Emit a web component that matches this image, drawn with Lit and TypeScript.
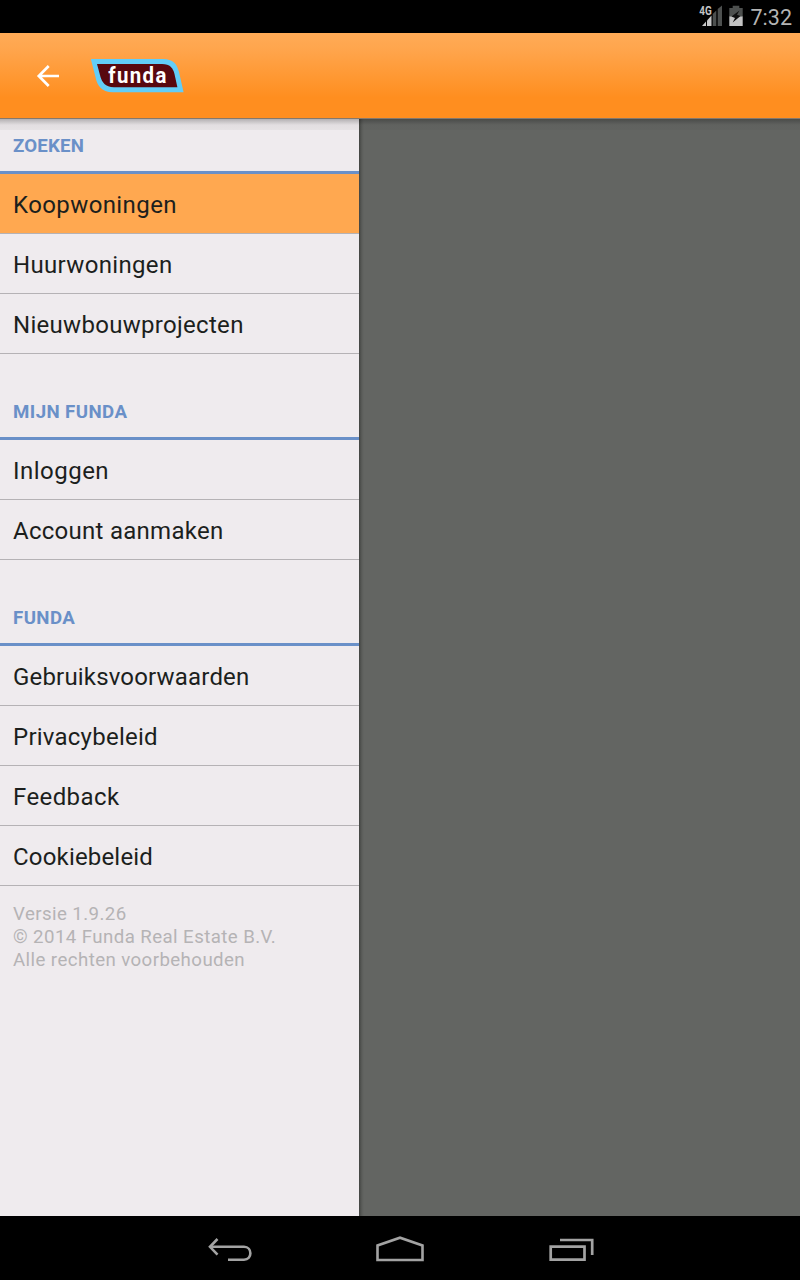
import { LitElement, html, css } from "lit";
import { customElement, property } from "lit/decorators.js";
import { styleMap } from "lit/directives/style-map.js";

interface Label {
  text: string;
  tracking: number;
}

interface Section {
  title: Label;
  items: Label[];
}

const label = (text: string, tracking: number): Label => ({ text, tracking });

const SECTIONS: Section[] = [
  {
    title: label("ZOEKEN", 0.2),
    items: [label("Koopwoningen", 0.4), label("Huurwoningen", 0.34), label("Nieuwbouwprojecten", 0.3)],
  },
  {
    title: label("MIJN FUNDA", 0.42),
    items: [label("Inloggen", 0.48), label("Account aanmaken", 0.27)],
  },
  {
    title: label("FUNDA", 0.4),
    items: [
      label("Gebruiksvoorwaarden", 0.18),
      label("Privacybeleid", 0.24),
      label("Feedback", 0.4),
      label("Cookiebeleid", 0.18),
    ],
  },
];

@customElement("status-bar")
export class StatusBar extends LitElement {
  static styles = css`
    :host {
      display: flex;
      align-items: center;
      justify-content: flex-end;
      height: 33px;
      padding-right: 8px;
      background: #000;
      color: #b4b4b4;
      box-sizing: border-box;
    }
    .icons { display: block; margin-right: 7px; }
    .net { font: 700 12.5px "Roboto", sans-serif; fill: #c4c4c4; }
    .clock { font-size: 21.5px; line-height: 33px; height: 32px; }
  `;
  render() {
    return html`
      <svg class="icons" width="46" height="33" viewBox="698 0 46 33">
        <path d="M702 26 L706 21.500 V26Z" fill="#c8c8c8" />
        <path d="M707 20.500 L711.500 15.500 V26 H707Z" fill="#c8c8c8" />
        <path d="M712.700 14 L716.300 10.500 V26 H712.700Z M717.700 9 L722 5.500 V26 H717.700Z" fill="#4d504f" />
        <text class="net" x="699.300" y="15.200" textLength="12.500" lengthAdjust="spacingAndGlyphs">4G</text>
        <path d="M729.300 8 H732.700 V5.700 H739.300 V8 H742.700 V17 H729.300Z" fill="#4d504f" />
        <path d="M729.300 16.500 H742.700 V26 H729.300Z" fill="#c4c4c4" />
        <path d="M739.500 10.500 L731.500 16.500 L735 18 L732.700 22.500 L740.500 16 L737 14.700Z" fill="#101010" />
      </svg>
      <span class="clock">7:32</span>
    `;
  }
}

@customElement("action-bar")
export class ActionBar extends LitElement {
  static styles = css`
    :host {
      display: flex;
      align-items: center;
      height: 86px;
      padding-left: 36px;
      box-sizing: border-box;
      border-bottom: 1px solid #85786c;
      background: linear-gradient(#ffab57 0, #ffa54c 20%, #ff8e1f 76%, #ff8e1f 100%);
    }
    .back { display: block; margin-right: 31px; }
    .logo { display: block; }
    .brand { font: 700 22.5px "Roboto", sans-serif; fill: #fff; letter-spacing: 1.5px; }
  `;
  render() {
    return html`
      <svg class="back" width="24" height="26" viewBox="36 63 24 26">
        <path d="M59 76 H39 M48.700 66 L38.800 76 L48.700 86" fill="none" stroke="#fff" stroke-width="2.700" />
      </svg>
      <svg class="logo" width="93" height="36" viewBox="91 58 93 36">
        <path d="M90.800 59 H163 C173 59 177 64 179 72 L183.600 92.300 H113 C101 92 97 85 95.500 77Z" fill="#62cdf8" />
        <path d="M97 64 H162 C170 64 173 68 174.500 74 L177.400 87.200 H114 C105 87 102 82 100.500 77Z" fill="#58080f" />
        <text class="brand" x="108.300" y="82.800" textLength="59.500" lengthAdjust="spacingAndGlyphs">funda</text>
      </svg>
    `;
  }
}

@customElement("drawer-section")
export class DrawerSection extends LitElement {
  static styles = css`
    :host { display: block; }
    .title {
      height: 86px;
      padding: 0 13px 14px;
      box-sizing: border-box;
      display: flex;
      align-items: flex-end;
      border-bottom: 3px solid #6a90c8;
      color: #6a90c8;
      font-size: 18.67px;
      font-weight: 700;
      line-height: 22px;
    }
    .title.first { height: 55px; }
    .item {
      height: 60px;
      box-sizing: border-box;
      padding: 2px 13px 0;
      border-bottom: 1px solid #b5b2b5;
      color: #1c1f1d;
      font-size: 24px;
      line-height: 59px;
      white-space: nowrap;
    }
    .item.active { background: #ffa850; }
  `;
  @property({ attribute: false }) section!: Section;
  @property({ type: Boolean }) first = false;

  private tracking(l: Label) {
    return styleMap({ letterSpacing: `${l.tracking}px` });
  }

  render() {
    const { title, items } = this.section;
    return html`
      <div class="title ${this.first ? "first" : ""}" style=${this.tracking(title)}>${title.text}</div>
      ${items.map(
        (l, i) => html`<div class="item ${this.first && i === 0 ? "active" : ""}" style=${this.tracking(l)}>${l.text}</div>`,
      )}
    `;
  }
}

@customElement("nav-bar")
export class NavBar extends LitElement {
  static styles = css`
    :host { display: block; height: 64px; background: #000; }
    svg { display: block; }
  `;
  render() {
    return html`
      <svg width="800" height="64" viewBox="0 1216 800 64" fill="none" stroke="#a3a3a3">
        <path d="M211 1246.800 H244 C252.500 1247 252.500 1259.500 244 1259.700 H228" stroke-width="2.600" />
        <path d="M217.500 1239 L210 1246.800 L217.500 1254.600" stroke-width="2.600" />
        <path d="M377.500 1260 V1245.500 L400 1237.700 L422.500 1245.500 V1260Z" stroke-width="2.600" />
        <path d="M550.700 1246.700 H584.500 V1259.700 H550.700Z M560 1240 H592.200 V1255" stroke-width="2.700" />
      </svg>
    `;
  }
}

@customElement("app-root")
export class AppRoot extends LitElement {
  static styles = css`
    :host {
      display: flex;
      flex-direction: column;
      height: 1280px;
      width: 800px;
      overflow: hidden;
      font-family: "Roboto", sans-serif;
    }
    .content {
      flex: 1;
      display: flex;
      position: relative;
      min-height: 0;
    }
    .shade {
      position: absolute;
      top: 0;
      left: 0;
      right: 0;
      height: 11px;
      background: linear-gradient(rgba(0, 0, 0, 0.25), rgba(60, 60, 60, 0.07) 6px, rgba(60, 60, 60, 0.05));
    }
    .drawer { width: 359px; background: #efebee; }
    .scrim {
      flex: 1;
      background: linear-gradient(90deg, #424441 0, #5b5d5a 3px, #636562 5px);
    }
    .about {
      padding: 17px 13px;
      font-size: 18.67px;
      line-height: 23px;
      color: #b5b3b5;
      letter-spacing: 0.42px;
      white-space: nowrap;
    }
  `;
  render() {
    return html`
      <status-bar></status-bar>
      <action-bar></action-bar>
      <div class="content">
        <nav class="drawer">
          ${SECTIONS.map(
            (s, i) => html`<drawer-section .section=${s} ?first=${i === 0}></drawer-section>`,
          )}
          <div class="about">
            Versie 1.9.26<br />© 2014 Funda Real Estate B.V.<br />Alle rechten voorbehouden
          </div>
        </nav>
        <div class="scrim"></div>
        <div class="shade"></div>
      </div>
      <nav-bar></nav-bar>
    `;
  }
}
